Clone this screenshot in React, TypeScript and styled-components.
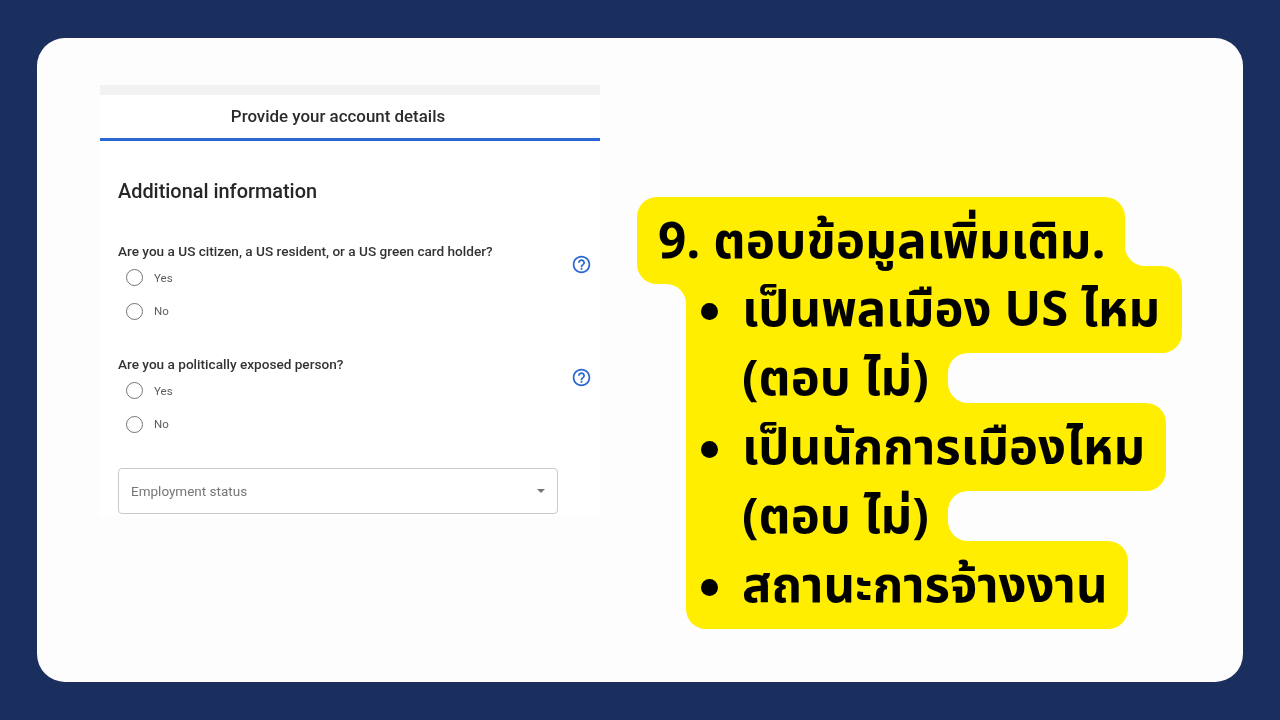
import styled, { createGlobalStyle } from "styled-components";

const GlobalStyle = createGlobalStyle`
    html, body {
        margin: 0;
        padding: 0;
        background: #1b2f5f;
    }
`;

const PageEl = styled.div`
    width: 1280px;
    height: 720px;
    padding: 38px 37px;
    box-sizing: border-box;
    overflow: hidden;
`;

const CardEl = styled.main`
    height: 644px;
    box-sizing: border-box;
    padding: 47px 0 0 63px;
    display: flex;
    align-items: flex-start;
    background: #fdfdfd;
    border-radius: 28px;
`;

const PanelEl = styled.section`
    width: 500px;
    height: 431px;
    flex: none;
    background: #ffffff;
    font-family: Roboto, "Liberation Sans", sans-serif;
    filter: blur(0.35px);
`;

const TopStripEl = styled.div`
    height: 10px;
    background: #f2f2f2;
`;

const PanelHeaderEl = styled.header`
    height: 41px;
    padding: 0 24px 2px 0;
    display: flex;
    align-items: center;
    justify-content: center;
    border-bottom: 3px solid #2a67d2;
    font-size: 16.9px;
    font-weight: 500;
    color: #2b2b2b;
`;

const PanelBodyEl = styled.div`
    padding: 0 8px 0 18px;
`;

const TitleEl = styled.h2`
    margin: 39px 0 0;
    font-size: 19.9px;
    line-height: 23px;
    font-weight: 500;
    color: #262626;
`;

const QuestionEl = styled.div<{ $top: number }>`
    margin-top: ${(props) => props.$top}px;
    display: flex;
    align-items: flex-start;
    justify-content: space-between;
`;

const QuestionTextEl = styled.div`
    font-size: 13.6px;
    line-height: 16px;
    font-weight: 500;
    color: #333333;
`;

const OptionEl = styled.label`
    height: 33.5px;
    padding-left: 8px;
    display: flex;
    align-items: center;
    gap: 11px;
    font-size: 11.5px;
    font-weight: 400;
    color: #5c5c5c;
`;

const OptionListEl = styled.div`
    margin-top: 2.5px;
`;

const RadioEl = styled.span`
    width: 17px;
    height: 17px;
    box-sizing: border-box;
    border: 1.5px solid #757575;
    border-radius: 50%;
`;

const HelpIconEl = styled.svg`
    width: 21px;
    height: 21px;
    margin-top: 11.5px;
    fill: #2a67d2;
`;

const SelectEl = styled.div`
    width: 440px;
    height: 46px;
    margin-top: 27px;
    padding: 0 12px 1px 12px;
    box-sizing: border-box;
    display: flex;
    align-items: center;
    justify-content: space-between;
    border: 1px solid #c9c9c9;
    border-radius: 4px;
    font-size: 13.5px;
    color: #767676;
`;

const CaretEl = styled.span`
    width: 0;
    height: 0;
    border-left: 4.5px solid transparent;
    border-right: 4.5px solid transparent;
    border-top: 4px solid #757575;
`;

const CalloutEl = styled.aside`
    position: relative;
    width: 545px;
    height: 432px;
    margin: 112px 0 0 37px;
    flex: none;
    font-family: "Noto Sans Thai", "Noto Sans", "Noto Sans CJK SC", sans-serif;
    font-weight: 700;
    line-height: 69px;
    color: #000000;
`;

const HighlightEl = styled.svg`
    position: absolute;
    left: 0;
    top: 0;
    width: 545px;
    height: 432px;
    fill: #ffee00;
`;

const CalloutTextEl = styled.div`
    position: relative;
    padding-top: 11px;
`;

const CalloutTitleEl = styled.div`
    padding-left: 21px;
    font-size: 49.5px;
`;

const BulletListEl = styled.ul`
    margin: 0;
    padding: 0 0 0 105px;
    list-style: none;
    font-size: 49px;
`;

const BulletEl = styled.li`
    position: relative;
    &::before {
        content: "";
        position: absolute;
        left: -41px;
        top: 26px;
        width: 17px;
        height: 17px;
        border-radius: 50%;
        background: #000000;
    }
`;

const questions = [
    { text: "Are you a US citizen, a US resident, or a US green card holder?", top: 39.5 },
    { text: "Are you a politically exposed person?", top: 27.5 },
];

const highlightPath =
    "M20 0H468A20 20 0 0 1 488 20V49A20 20 0 0 0 508 69H525A20 20 0 0 1 545 89V136A20 20 0 0 1 525 156H331A20 20 0 0 0 311 176V186A20 20 0 0 0 331 206H509A20 20 0 0 1 529 226V274A20 20 0 0 1 509 294H331A20 20 0 0 0 311 314V324A20 20 0 0 0 331 344H471A20 20 0 0 1 491 364V412A20 20 0 0 1 471 432H69A20 20 0 0 1 49 412V107A20 20 0 0 0 29 87H20A20 20 0 0 1 0 67V20A20 20 0 0 1 20 0Z";

export default function App() {
    return (
        <PageEl>
            <GlobalStyle />
            <CardEl>
                <PanelEl>
                    <TopStripEl />
                    <PanelHeaderEl>Provide your account details</PanelHeaderEl>
                    <PanelBodyEl>
                        <TitleEl>Additional information</TitleEl>
                        {questions.map((question) => (
                            <QuestionEl key={question.text} $top={question.top}>
                                <div>
                                    <QuestionTextEl>{question.text}</QuestionTextEl>
                                    <OptionListEl>
                                        <OptionEl>
                                            <RadioEl />
                                            Yes
                                        </OptionEl>
                                        <OptionEl>
                                            <RadioEl />
                                            No
                                        </OptionEl>
                                    </OptionListEl>
                                </div>
                                <HelpIconEl viewBox="0 0 24 24">
                                    <path d="M11 18h2v-2h-2v2zm1-16C6.48 2 2 6.48 2 12s4.48 10 10 10 10-4.48 10-10S17.52 2 12 2zm0 18c-4.41 0-8-3.59-8-8s3.59-8 8-8 8 3.59 8 8-3.59 8-8 8zm0-14c-2.21 0-4 1.79-4 4h2c0-1.1.9-2 2-2s2 .9 2 2c0 2-3 1.75-3 5h2c0-2.25 3-2.5 3-5 0-2.21-1.79-4-4-4z" />
                                </HelpIconEl>
                            </QuestionEl>
                        ))}
                        <SelectEl>
                            Employment status
                            <CaretEl />
                        </SelectEl>
                    </PanelBodyEl>
                </PanelEl>
                <CalloutEl>
                    <HighlightEl viewBox="0 0 545 432">
                        <path d={highlightPath} />
                    </HighlightEl>
                    <CalloutTextEl>
                        <CalloutTitleEl>9. ตอบข้อมูลเพิ่มเติม.</CalloutTitleEl>
                        <BulletListEl>
                            <BulletEl>
                                เป็นพลเมือง US ไหม
                                <br />
                                (ตอบ ไม่)
                            </BulletEl>
                            <BulletEl>
                                เป็นนักการเมืองไหม
                                <br />
                                (ตอบ ไม่)
                            </BulletEl>
                            <BulletEl>สถานะการจ้างงาน</BulletEl>
                        </BulletListEl>
                    </CalloutTextEl>
                </CalloutEl>
            </CardEl>
        </PageEl>
    );
}
